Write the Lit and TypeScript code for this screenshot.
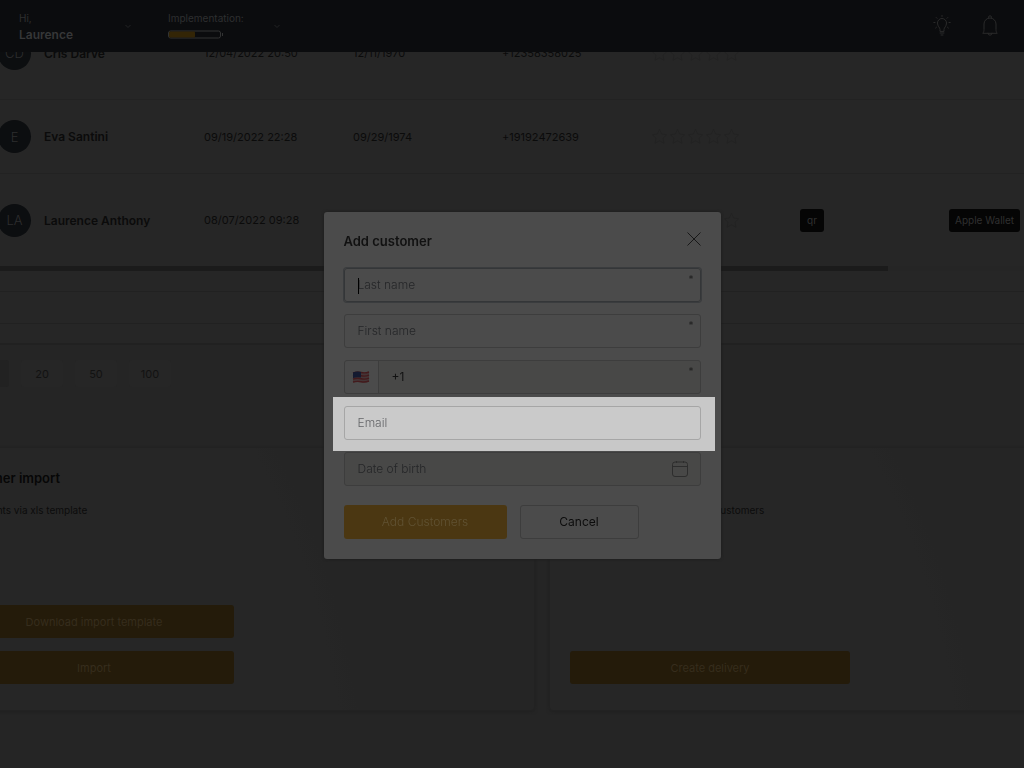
import { LitElement, html, css, svg } from "lit";
import { customElement, property } from "lit/decorators.js";

interface Customer {
  initials: string;
  name: string;
  created: string;
  born: string;
  phone: string;
  actions: boolean;
}

const customers: Customer[] = [
  { initials: "CD", name: "Cris Darve", created: "12/04/2022 20:50", born: "12/11/1970", phone: "+12358358025", actions: false },
  { initials: "E", name: "Eva Santini", created: "09/19/2022 22:28", born: "09/29/1974", phone: "+19192472639", actions: false },
  { initials: "LA", name: "Laurence Anthony", created: "08/07/2022 09:28", born: "", phone: "", actions: true },
];

const chevron = svg`<path d="M1.500 2 4 4.500 6.500 2" fill="none" stroke="#222324" />`;

@customElement("star-rating")
class StarRating extends LitElement {
  static styles = css`
    :host { display: flex; gap: 1px; color: #222; }
    svg { display: block; width: 17px; height: 17px; }
  `;
  render() {
    return [1, 2, 3, 4, 5].map(
      () => html`<svg viewBox="0 0 18 18" aria-hidden="true">
        <path d="M9 1.500 11.300 6.400 16.600 7.100 12.700 10.800 13.700 16.100 9 13.500 4.300 16.100 5.300 10.800 1.400 7.100 6.700 6.400Z" fill="none" stroke="currentColor" stroke-linejoin="round" />
      </svg>`
    );
  }
}

@customElement("app-header")
class AppHeader extends LitElement {
  static styles = css`
    :host {
      position: fixed; top: 0; left: 0; right: 0; z-index: 2;
      display: flex; align-items: center; justify-content: space-between;
      height: 52px; padding: 0 24px 0 19px; box-sizing: border-box;
      background: #0b0c0e; color: #2e2f30; font-size: 10px;
    }
    .group, .icons { display: flex; align-items: center; }
    button {
      display: flex; align-items: center; justify-content: space-between;
      padding: 0; border: 0; background: none; color: inherit; font: inherit; text-align: left;
    }
    .user { width: 113px; margin-right: 36px; }
    .progress { width: 113px; }
    .stack { display: flex; flex-direction: column; line-height: 16px; }
    .stack strong { font-size: 12px; font-weight: 600; color: #363738; line-height: 17px; }
    .progress .stack { gap: 4px; padding-bottom: 4px; }
    .chevron { width: 8px; height: 6px; }
    .battery { width: 55px; height: 9px; display: block; }
    .icons { gap: 28px; }
    .icons svg { display: block; width: 20px; height: 22px; color: #2a2a2a; }
  `;
  render() {
    return html`
      <div class="group">
        <button class="user">
          <span class="stack"><span>Hi,</span><strong>Laurence</strong></span>
          <svg class="chevron" viewBox="0 0 8 6">${chevron}</svg>
        </button>
        <button class="progress">
          <span class="stack">
            <span>Implementation:</span>
            <svg class="battery" viewBox="0 0 55 9">
              <rect x="0.5" y="1" width="52" height="7" rx="2" fill="none" stroke="#323333" />
              <rect x="1" y="1.5" width="26" height="6" rx="1" fill="#332506" />
              <path d="M54.500 3v3" stroke="#323333" />
            </svg>
          </span>
          <svg class="chevron" viewBox="0 0 8 6">${chevron}</svg>
        </button>
      </div>
      <div class="icons">
        <button aria-label="Tips">
          <svg viewBox="0 0 20 22" fill="none" stroke="currentColor" stroke-linecap="round" stroke-linejoin="round">
            <path d="M8 16v-1.500C8 12.500 5.500 11.500 5.500 8a4.500 4.500 0 0 1 9 0c0 3.500-2.500 4.500-2.500 6.500V16ZM8 18h4M9 20h2" />
            <path d="M10 .500v1M4.200 2.500l.8.800M15.800 2.500l-.8.800M1.800 7.500H3M17 7.500h1.200M3.600 13l.9-.8M16.400 13l-.9-.8" />
          </svg>
        </button>
        <button aria-label="Notifications">
          <svg viewBox="0 0 20 22" fill="none" stroke="currentColor" stroke-linecap="round" stroke-linejoin="round">
            <path d="M8.500 3V2.300a1.500 1.500 0 0 1 3 0V3M3 18c.8-1 1-2 1-3.500V9a6 6 0 0 1 12 0v5.500c0 1.500.2 2.500 1 3.500ZM8 18.200a2 2 0 0 0 4 0" />
          </svg>
        </button>
      </div>
    `;
  }
}

@customElement("promo-card")
class PromoCard extends LitElement {
  @property() heading = "";
  @property() text = "";
  @property({ attribute: false }) actions: string[] = [];
  static styles = css`
    :host {
      display: flex; flex-direction: column; box-sizing: border-box; min-height: 264px;
      padding: 20px 20px 26px; border: 1px solid #222; border-radius: 4px;
      background: radial-gradient(circle at -60% 140%, #262626 75%, #252525 77%);
      box-shadow: 0 1px 3px #202020;
    }
    h2 { margin: 0; font-size: 13px; line-height: 20px; font-weight: 600; color: #070707; }
    p { margin: 13px 0 0; font-size: 10px; line-height: 18px; color: #0c0c0c; }
    .actions { display: flex; flex-direction: column; gap: 13px; width: 50%; margin-top: auto; }
    button {
      height: 33px; border: 0; border-radius: 3px; background: #241b0a; color: #362d1d;
      font: inherit; font-size: 11px;
    }
  `;
  render() {
    return html`
      <h2>${this.heading}</h2>
      <p>${this.text}</p>
      <div class="actions">${this.actions.map((a) => html`<button>${a}</button>`)}</div>
    `;
  }
}

@customElement("customer-dialog")
class CustomerDialog extends LitElement {
  static styles = css`
    :host {
      position: fixed; inset: 0; z-index: 3; box-sizing: border-box; padding: 2px 0 0 20px;
      display: flex; align-items: center; justify-content: center;
    }
    .dialog {
      box-sizing: border-box; width: 397px; max-width: 100%; padding: 20px;
      border-radius: 3px; background: #4b4b4b; color: #111; box-shadow: 0 0 3px #1c1c1c;
    }
    .head { display: flex; justify-content: space-between; height: 17px; margin-bottom: 19px; }
    h1 { margin: 0; font-size: 13px; line-height: 18px; font-weight: 600; }
    .close { display: block; width: 14px; height: 14px; padding: 0; border: 0; background: none; color: #181818; }
    .close svg { display: block; }
    form { display: flex; flex-direction: column; gap: 12px; }
    .field {
      position: relative; display: flex; align-items: center; box-sizing: border-box; height: 34px;
      border: 1px solid #3d3d3d; border-radius: 3px;
    }
    .focused { border-color: #343638; box-shadow: 0 0 0 1px #3a3c3e; }
    .muted { background: #484847; }
    input {
      flex: 1; min-width: 0; height: 100%; box-sizing: border-box; padding: 0 13px;
      border: 0; outline: 0; background: none; color: #121212; font: inherit; font-size: 12px;
    }
    input::placeholder { color: #252628; opacity: 1; font-weight: 300; }
    .caret { position: absolute; left: 13px; top: 9px; width: 1px; height: 16px; background: #000; }
    .star { position: absolute; right: 6px; top: 4px; font-size: 10px; line-height: 12px; color: #202020; }
    .spot { margin: -9px -14px -11px -11px; padding: 9px 14px 11px 11px; background: #c8c8c8; }
    .spot .field { border-color: #a6a6a6; background: #cacaca; }
    .spot input::placeholder { color: #646568; }
    .country {
      display: flex; align-items: center; justify-content: center; width: 34px; height: 100%;
      padding: 0; border: 0; border-right: 1px solid #3d3d3d; border-radius: 3px 0 0 3px; background: #4b4b4b;
    }
    .calendar { width: 16px; height: 16px; margin-right: 12px; color: #2d2d2d; }
    .buttons { display: flex; gap: 13px; margin-top: 7px; }
    .buttons button { height: 34px; border-radius: 3px; font: inherit; font-size: 12px; }
    .buttons .primary { width: 163px; border: 0; background: #4b3712; color: #605233; font-weight: 300; }
    .secondary { width: 119px; border: 1px solid #3d3d3d; background: none; color: #0c0c0c; }
  `;
  render() {
    return html`
      <section class="dialog" role="dialog" aria-labelledby="title">
        <div class="head">
          <h1 id="title">Add customer</h1>
          <button class="close" aria-label="Close">
            <svg width="14" height="14" viewBox="0 0 14 14"><path d="M.5.5l13 13M13.500.5l-13 13" fill="none" stroke="currentColor" /></svg>
          </button>
        </div>
        <form>
          <div class="field focused">
            <input aria-label="Last name" placeholder="Last name" />
            <span class="caret"></span><span class="star">*</span>
          </div>
          <div class="field">
            <input aria-label="First name" placeholder="First name" /><span class="star">*</span>
          </div>
          <div class="field muted">
            <button class="country" type="button" aria-label="Country: United States">
              <svg width="18" height="14" viewBox="0 0 18 14">
                <path d="M1 2.500q4-1.500 8-.5t8-.5v10q-4 1.500-8 .5t-8 .5Z" fill="#443536" />
                <path d="M1 3q4-1.500 8-.5t8-.5M1 6.200q4-1.500 8-.5t8-.5M1 9.200q4-1.500 8-.5t8-.5M1 12q4-1 8-.3t8-.7" fill="none" stroke="#431a1c" stroke-width="1.400" />
                <path d="M1 2.500q4-1.500 8-.5v5.600q-4-1-8 .4Z" fill="#141a30" />
              </svg>
            </button>
            <input aria-label="Phone" type="tel" value="+1" /><span class="star">*</span>
          </div>
          <div class="spot">
            <div class="field"><input aria-label="Email" type="email" placeholder="Email" /></div>
          </div>
          <div class="field muted">
            <input aria-label="Date of birth" placeholder="Date of birth" />
            <svg class="calendar" viewBox="0 0 16 16" fill="none" stroke="currentColor">
              <rect x="0.500" y="1" width="15" height="14.500" rx="2.500" />
              <path d="M.5 5.500h15M4.500 0v2M11.500 0v2" />
            </svg>
          </div>
          <div class="buttons">
            <button class="primary" type="button">Add Customers</button>
            <button class="secondary" type="button">Cancel</button>
          </div>
        </form>
      </section>
    `;
  }
}

@customElement("app-root")
class AppRoot extends LitElement {
  static styles = css`
    :host {
      display: block; box-sizing: border-box; min-height: 100vh; overflow: hidden; background: #252525;
      color: #0b0b0b; font-family: Inter, "Liberation Sans", sans-serif; font-size: 12px;
    }
    main { margin: 0 -127px 0 -67px; padding-top: 7px; }
    .list { border-bottom: 2px solid #212121; background: #262626; }
    table { width: 100%; border-collapse: collapse; table-layout: fixed; }
    .wide { width: 271px; }
    .col { width: 149px; }
    td { height: 73px; padding: 0; border-bottom: 1px solid #222; font-size: 11px; }
    .tall td { height: 92px; }
    tr:last-child td { border-bottom: 0; }
    .person { display: flex; align-items: center; gap: 13px; padding-left: 65px; font-size: 12px; font-weight: 600; }
    .avatar {
      display: flex; align-items: center; justify-content: center; width: 33px; height: 33px;
      border-radius: 50%; background: #0c0e10; color: #2c2d2e; font-size: 13px; font-weight: 300;
    }
    .chip { height: 23px; min-width: 24px; padding: 0 6px; border: 0; border-radius: 3px; background: #050505; color: #303030; font: inherit; font-size: 10px; }
    .track { height: 5px; background: #252525; }
    .thumb { width: 78.400%; height: 100%; background: #1b1b1b; }
    .summary { height: 31px; margin: 20px 0 19px; border: solid #212121; border-width: 1px 0; }
    .pages { display: flex; gap: 12px; padding: 15px 0 60px 34px; }
    .page { width: 42px; height: 27px; padding: 0; border: 0; border-radius: 3px; background: #262626; color: #121212; font: inherit; font-size: 11px; }
    .page.active { background: #222; }
    .cards { display: grid; grid-template-columns: 1fr 1fr; gap: 14px; padding-bottom: 57px; }
  `;
  render() {
    return html`
      <app-header></app-header>
      <main>
        <section class="list">
          <table>
            <colgroup>
              <col class="wide" /><col class="col" /><col class="col" /><col class="col" /><col class="col" /><col class="col" /><col />
            </colgroup>
            <tbody>
              ${customers.map(
                (c, i) => html`<tr class=${i === 1 ? "" : "tall"}>
                  <td><div class="person"><span class="avatar">${c.initials}</span>${c.name}</div></td>
                  <td>${c.created}</td>
                  <td>${c.born}</td>
                  <td>${c.phone}</td>
                  <td><star-rating></star-rating></td>
                  <td>${c.actions ? html`<button class="chip">qr</button>` : ""}</td>
                  <td>${c.actions ? html`<button class="chip">Apple Wallet</button>` : ""}</td>
                </tr>`
              )}
            </tbody>
          </table>
          <div class="track"><div class="thumb"></div></div>
          <div class="summary"></div>
        </section>
        <nav class="pages" aria-label="Rows per page">
          <button class="page active" aria-label="10"></button>
          ${[20, 50, 100].map((n) => html`<button class="page">${n}</button>`)}
        </nav>
        <section class="cards">
          <promo-card heading="Customer import" text="Load clients via xls template" .actions=${["Download import template", "Import"]}></promo-card>
          <promo-card heading="Delivery" text="Create a message delivery for customers" .actions=${["Create delivery"]}></promo-card>
        </section>
      </main>
      <customer-dialog></customer-dialog>
    `;
  }
}
